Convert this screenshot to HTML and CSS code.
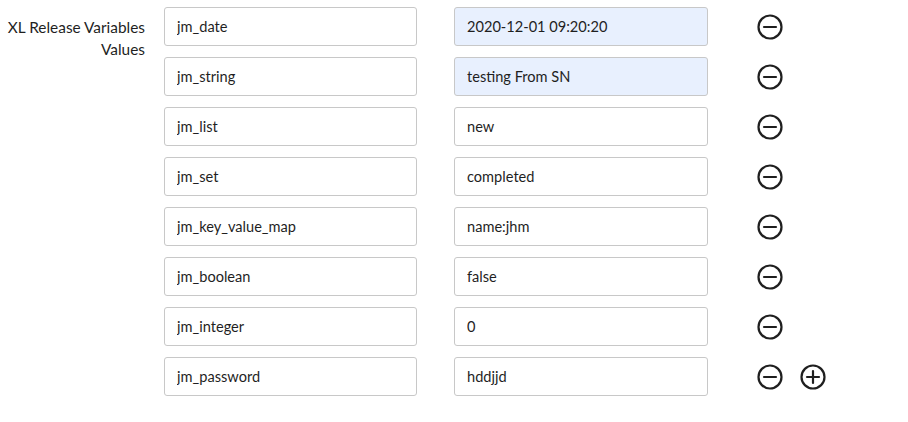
FILE: index.html
```html
<!DOCTYPE html>
<html>
<head>
<meta charset="utf-8">
<link rel="stylesheet" href="styles.css">
</head>
<body>
<div class="field">
  <label class="field-label">XL Release Variables Values</label>
  <div class="rows">
    <div class="row">
      <input class="box" value="jm_date">
      <input class="box filled" value="2020-12-01 09:20:20">
      <div class="actions"><svg class="icon" viewBox="0 0 26 26"><circle cx="13" cy="13" r="11.5"/><line x1="7" y1="13" x2="19" y2="13"/></svg></div>
    </div>
    <div class="row">
      <input class="box" value="jm_string">
      <input class="box filled" value="testing From SN">
      <div class="actions"><svg class="icon" viewBox="0 0 26 26"><circle cx="13" cy="13" r="11.5"/><line x1="7" y1="13" x2="19" y2="13"/></svg></div>
    </div>
    <div class="row">
      <input class="box" value="jm_list">
      <input class="box" value="new">
      <div class="actions"><svg class="icon" viewBox="0 0 26 26"><circle cx="13" cy="13" r="11.5"/><line x1="7" y1="13" x2="19" y2="13"/></svg></div>
    </div>
    <div class="row">
      <input class="box" value="jm_set">
      <input class="box" value="completed">
      <div class="actions"><svg class="icon" viewBox="0 0 26 26"><circle cx="13" cy="13" r="11.5"/><line x1="7" y1="13" x2="19" y2="13"/></svg></div>
    </div>
    <div class="row">
      <input class="box" value="jm_key_value_map">
      <input class="box" value="name:jhm">
      <div class="actions"><svg class="icon" viewBox="0 0 26 26"><circle cx="13" cy="13" r="11.5"/><line x1="7" y1="13" x2="19" y2="13"/></svg></div>
    </div>
    <div class="row">
      <input class="box" value="jm_boolean">
      <input class="box" value="false">
      <div class="actions"><svg class="icon" viewBox="0 0 26 26"><circle cx="13" cy="13" r="11.5"/><line x1="7" y1="13" x2="19" y2="13"/></svg></div>
    </div>
    <div class="row">
      <input class="box" value="jm_integer">
      <input class="box" value="0">
      <div class="actions"><svg class="icon" viewBox="0 0 26 26"><circle cx="13" cy="13" r="11.5"/><line x1="7" y1="13" x2="19" y2="13"/></svg></div>
    </div>
    <div class="row">
      <input class="box" value="jm_password">
      <input class="box" value="hddjjd">
      <div class="actions">
        <svg class="icon" viewBox="0 0 26 26"><circle cx="13" cy="13" r="11.5"/><line x1="7" y1="13" x2="19" y2="13"/></svg>
        <svg class="icon" viewBox="0 0 26 26"><circle cx="13" cy="13" r="11.5"/><line x1="7" y1="13" x2="19" y2="13"/><line x1="13" y1="7" x2="13" y2="19"/></svg>
      </div>
    </div>
  </div>
</div>
</body>
</html>
```
FILE: styles.css
```css
html, body {
  margin: 0;
  padding: 0;
  background: #ffffff;
}
body {
  font-family: "Lato", "Liberation Sans", sans-serif;
  font-size: 15px;
  color: #1f1f1f;
}
.field {
  display: flex;
  align-items: flex-start;
  gap: 19px;
  padding-top: 7px;
}
.field-label {
  width: 145px;
  text-align: right;
  line-height: 22px;
  padding-top: 9px;
  font-size: 15.4px;
  color: #1f1f1f;
}
.rows {
  display: flex;
  flex-direction: column;
  gap: 11px;
}
.row {
  display: flex;
  align-items: center;
}
.box {
  box-sizing: border-box;
  width: 253px;
  height: 39px;
  border: 1px solid #c8c8c8;
  border-radius: 3px;
  padding: 0 12px;
  font-family: inherit;
  font-size: 14.6px;
  color: #1f1f1f;
  background: #fff;
  outline: none;
}
.box + .box {
  margin-left: 37px;
  width: 254px;
}
.box.filled {
  background: #e8f0fe;
}
.actions {
  display: flex;
  gap: 17px;
  margin-left: 49px;
}
.icon {
  width: 26px;
  height: 26px;
  fill: none;
  stroke: #1f1f1f;
  stroke-width: 2.2;
  stroke-linecap: round;
}
```
